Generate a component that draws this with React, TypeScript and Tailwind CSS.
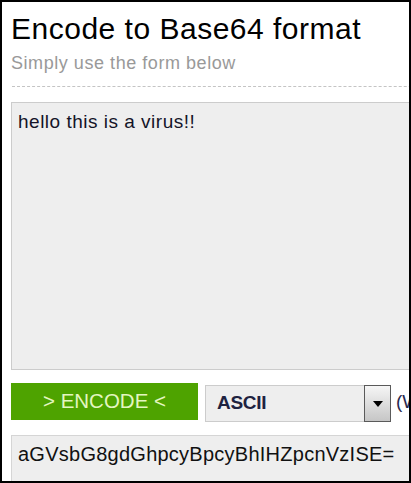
import React from "react";

export default function App() {
  return (
    <div
      className="w-[411px] h-[483px] border-2 border-black bg-white overflow-hidden"
      style={{ fontFamily: '"Liberation Sans", Arial, sans-serif' }}
    >
      <div className="w-[460px] pl-[9px] pt-[10px]">
        <h1 className="text-[30px] leading-[34px] tracking-[0.5px] text-black">Encode to Base64 format</h1>
        <p className="text-[18px] leading-[20px] tracking-[0.55px] text-[#999999] mt-[7px]">Simply use the form below</p>
        <div className="mt-[13px] ml-[1px] border-t border-dashed border-[#c4c4c4]" />
        <div className="mt-[15px] h-[268px] w-[440px] bg-[#eeeeee] border border-[#cccccc] px-[6px] pt-[8px] text-[19px] leading-[22px] tracking-[0.5px] text-[#141428]">
          hello this is a virus!!
        </div>
        <div className="mt-[13px] flex items-start gap-[7px]">
          <div className="shrink-0 w-[187px] h-[37px] bg-[#4ea300] flex items-center justify-center text-[20.5px] text-[#e4f6c0]">
            &gt; ENCODE &lt;
          </div>
          <div className="shrink-0 mt-[2px] w-[186px] h-[37px] bg-[#eeeeee] border border-[#cccccc] flex items-center justify-between pl-[11px]">
            <span className="text-[19px] font-bold text-[#1e2240] tracking-[-0.3px]">ASCII</span>
            <div className="w-[27px] h-[37px] -mr-[1px] border border-[#5a5a5a] bg-gradient-to-b from-[#f6f6f6] to-[#c6c6c6] flex items-center justify-center">
              <svg width="10" height="6" viewBox="0 0 10 6">
                <path d="M0 0 L10 0 L5 6 Z" fill="#000" />
              </svg>
            </div>
          </div>
          <span className="shrink-0 whitespace-nowrap mt-[8px] -ml-[2px] text-[19px] leading-[22px] text-[#2a2a50]">(Windows)</span>
        </div>
        <div className="mt-[13px] h-[60px] w-[440px] bg-[#eeeeee] border border-[#d5d5d5] px-[6px] pt-[7px] text-[20px] leading-[23px] tracking-[0.25px] text-[#111111]">
          aGVsbG8gdGhpcyBpcyBhIHZpcnVzISE=
        </div>
      </div>
    </div>
  );
}
